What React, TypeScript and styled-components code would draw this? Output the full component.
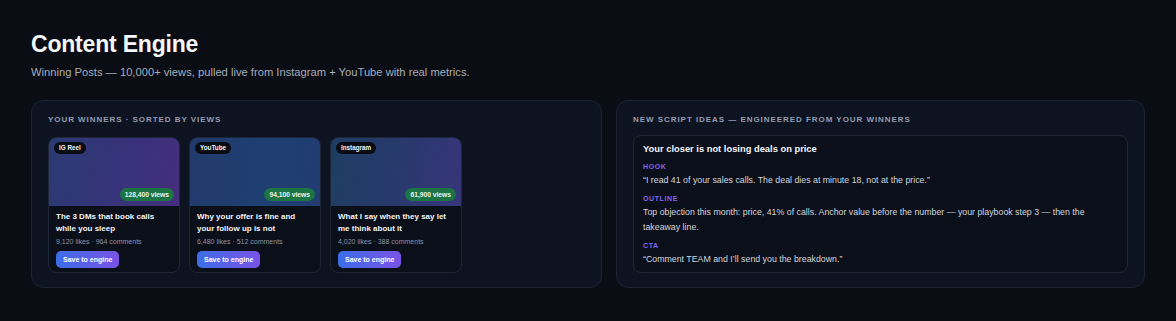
import styled, { createGlobalStyle } from "styled-components";

const GlobalStyle = createGlobalStyle`
  html, body {
    margin: 0;
    padding: 0;
    background: #0a0d14;
  }
  body {
    font-family: "Liberation Sans", Arial, sans-serif;
    color: #f2f4f8;
  }
`;

const Page = styled.div`
  padding: 30px 31px 30px 31px;
  min-height: 321px;
  box-sizing: border-box;
`;

const Title = styled.h1`
  margin: 0;
  font-size: 23px;
  line-height: 28px;
  font-weight: 700;
  letter-spacing: -0.2px;
  color: #f4f6fa;
`;

const Subtitle = styled.p`
  margin: 5px 0 0;
  font-size: 11.2px;
  line-height: 18px;
  color: #a6acb9;
`;

const Columns = styled.div`
  display: grid;
  grid-template-columns: 571px 1fr;
  gap: 14px;
  margin-top: 19px;
`;

const Panel = styled.section`
  background: #0e1321;
  border: 1px solid #1c2232;
  border-radius: 12px;
  padding: 13px 16px 14px;
`;

const PanelHeading = styled.h2<{ $tight?: boolean }>`
  margin: 0 0 ${(p) => (p.$tight ? "9px" : "11px")};
  font-size: 8px;
  line-height: 12px;
  font-weight: 700;
  letter-spacing: 0.95px;
  text-transform: uppercase;
  color: #949cae;
`;

const CardRow = styled.div`
  display: flex;
  gap: 9px;
`;

const Card = styled.article`
  width: 132px;
  box-sizing: border-box;
  background: #0b0f1a;
  border: 1px solid #1e2536;
  border-radius: 8px;
  overflow: hidden;
`;

const Thumb = styled.div<{ $bg: string }>`
  box-sizing: border-box;
  height: 68px;
  background: ${(p) => p.$bg};
  display: flex;
  flex-direction: column;
  justify-content: space-between;
  align-items: flex-start;
  padding: 4px 5px 5px;
`;

const Tag = styled.span`
  background: #0a0c14;
  color: #f4f6fa;
  font-size: 6.3px;
  font-weight: 700;
  line-height: 12px;
  padding: 0 5px;
  border-radius: 7px;
`;

const Views = styled.span`
  align-self: flex-end;
  background: #1c7445;
  color: #eaf6ef;
  font-size: 6.7px;
  font-weight: 700;
  line-height: 13px;
  padding: 0 5px;
  border-radius: 7px;
`;

const CardBody = styled.div`
  padding: 5px 7px 4px;
`;

const CardTitle = styled.h3`
  margin: 0;
  font-size: 8px;
  line-height: 11.5px;
  font-weight: 700;
  color: #f2f4f8;
`;

const Stats = styled.div`
  margin-top: 3px;
  font-size: 7px;
  line-height: 10px;
  color: #8b92a2;
`;

const SaveButton = styled.button`
  display: block;
  margin-top: 4px;
  border: none;
  border-radius: 5px;
  padding: 0 7px;
  height: 17px;
  font-family: inherit;
  font-size: 7px;
  font-weight: 700;
  color: #ffffff;
  background: linear-gradient(90deg, #3b6ee8, #7a52e6);
  cursor: pointer;
`;

const IdeaCard = styled.div`
  background: #0b0f1a;
  border: 1px solid #1e2536;
  border-radius: 8px;
  padding: 6px 9px 5px;
`;

const IdeaTitle = styled.h3`
  margin: 0 0 2.5px;
  font-size: 9.35px;
  line-height: 14px;
  font-weight: 700;
  color: #f4f6fa;
`;

const Label = styled.div`
  margin-top: 5.5px;
  font-size: 7px;
  line-height: 10px;
  font-weight: 700;
  letter-spacing: 0.6px;
  color: #8466ee;
`;

const IdeaText = styled.p`
  margin: 1.5px 0 0;
  font-size: 8.8px;
  line-height: 15px;
  color: #d2d6de;
`;

const POSTS = [
  {
    tag: "IG Reel",
    views: "128,400 views",
    title: "The 3 DMs that book calls while you sleep",
    stats: "9,120 likes · 964 comments",
    bg: "linear-gradient(100deg, #2a3a72 0%, #37337a 55%, #452e7c 100%)",
  },
  {
    tag: "YouTube",
    views: "94,100 views",
    title: "Why your offer is fine and your follow up is not",
    stats: "6,480 likes · 512 comments",
    bg: "linear-gradient(100deg, #223a6c 0%, #1f3f72 60%, #223c70 100%)",
  },
  {
    tag: "Instagram",
    views: "61,900 views",
    title: "What I say when they say let me think about it",
    stats: "4,020 likes · 388 comments",
    bg: "linear-gradient(100deg, #1e3d62 0%, #29396e 55%, #37357a 100%)",
  },
];

export default function App() {
  return (
    <>
      <GlobalStyle />
      <Page>
        <Title>Content Engine</Title>
        <Subtitle>
          Winning Posts — 10,000+ views, pulled live from Instagram + YouTube with real metrics.
        </Subtitle>
        <Columns>
          <Panel>
            <PanelHeading>Your winners · sorted by views</PanelHeading>
            <CardRow>
              {POSTS.map((post) => (
                <Card key={post.tag}>
                  <Thumb $bg={post.bg}>
                    <Tag>{post.tag}</Tag>
                    <Views>{post.views}</Views>
                  </Thumb>
                  <CardBody>
                    <CardTitle>{post.title}</CardTitle>
                    <Stats>{post.stats}</Stats>
                    <SaveButton>Save to engine</SaveButton>
                  </CardBody>
                </Card>
              ))}
            </CardRow>
          </Panel>
          <Panel>
            <PanelHeading $tight>New script ideas — engineered from your winners</PanelHeading>
            <IdeaCard>
              <IdeaTitle>Your closer is not losing deals on price</IdeaTitle>
              <Label>HOOK</Label>
              <IdeaText>“I read 41 of your sales calls. The deal dies at minute 18, not at the price.”</IdeaText>
              <Label>OUTLINE</Label>
              <IdeaText>
                Top objection this month: price, 41% of calls. Anchor value before the number — your playbook step 3 — then the takeaway line.
              </IdeaText>
              <Label>CTA</Label>
              <IdeaText>“Comment TEAM and I’ll send you the breakdown.”</IdeaText>
            </IdeaCard>
          </Panel>
        </Columns>
      </Page>
    </>
  );
}
